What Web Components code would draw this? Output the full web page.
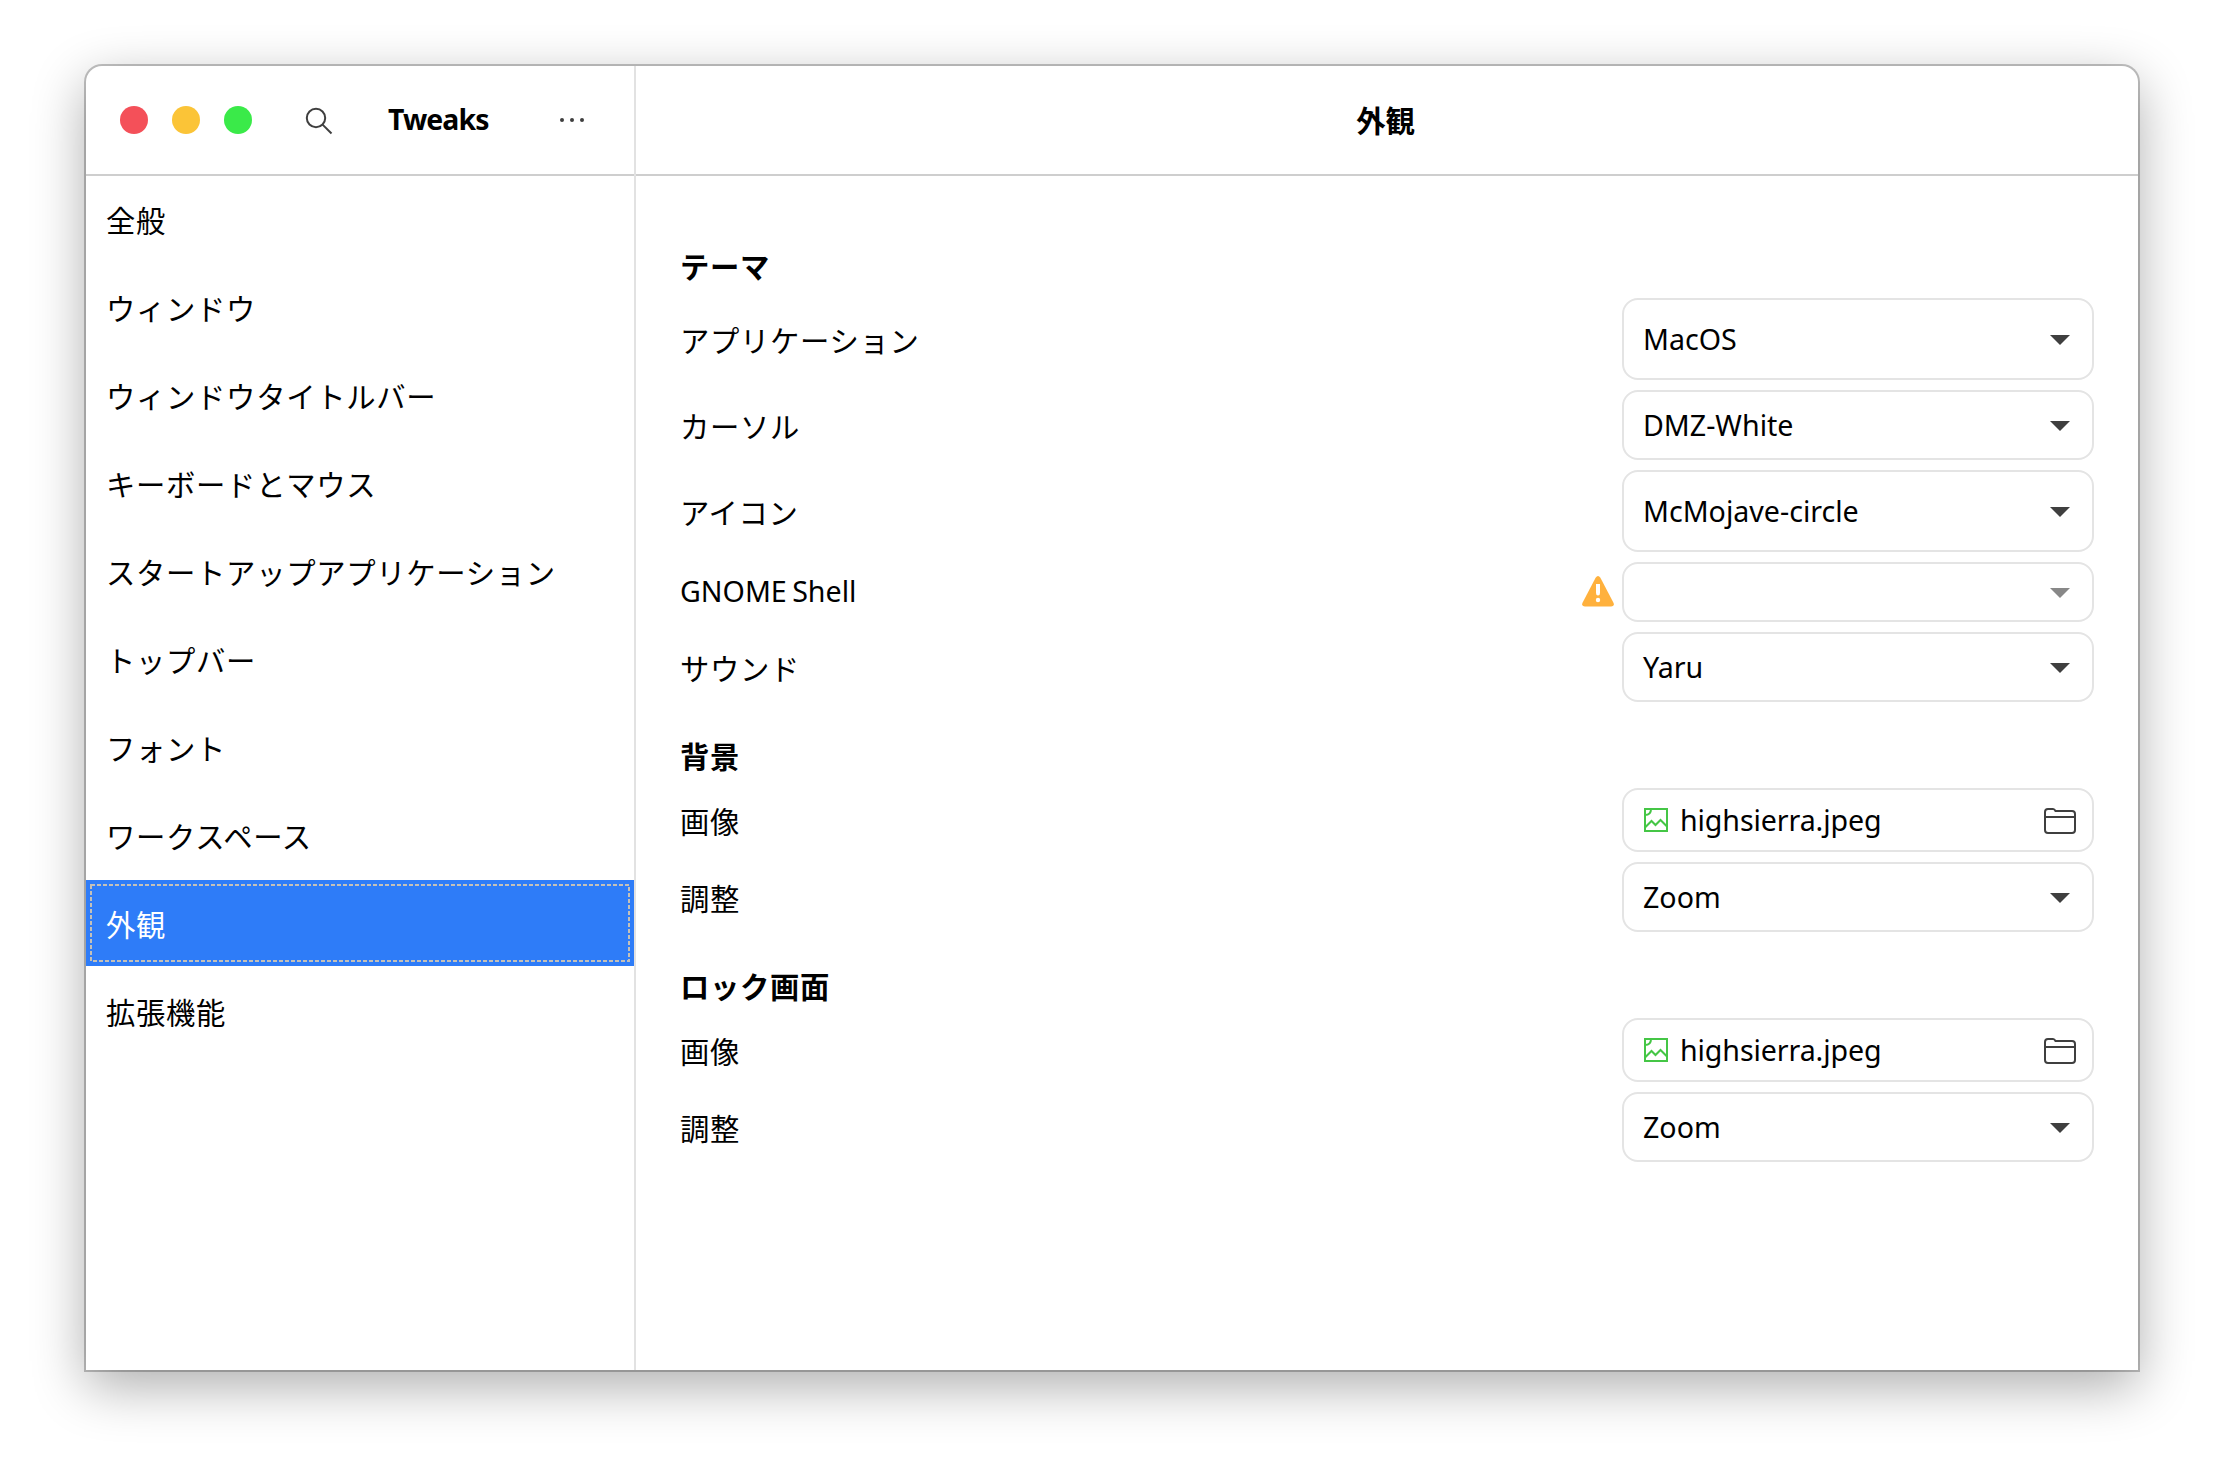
<!DOCTYPE html>
<html lang="ja">
<head>
<meta charset="utf-8">
<title>Tweaks</title>
<style>
    html, body {
        margin: 0;
        height: 100%;
        background: #fff;
    }

    body {
        box-sizing: border-box;
        padding: 66px 86px 106px;
        overflow: hidden;
        font-family: "Noto Sans", "Noto Sans CJK JP", sans-serif;
        font-size: 28.6px;
        color: #000;
    }
</style>
</head>
<body>
<tweaks-window>
    <title-bar slot="header" heading="Tweaks" page="外観"></title-bar>

    <side-item slot="sidebar">全般</side-item>
    <side-item slot="sidebar">ウィンドウ</side-item>
    <side-item slot="sidebar">ウィンドウタイトルバー</side-item>
    <side-item slot="sidebar">キーボードとマウス</side-item>
    <side-item slot="sidebar">スタートアップアプリケーション</side-item>
    <side-item slot="sidebar">トップバー</side-item>
    <side-item slot="sidebar">フォント</side-item>
    <side-item slot="sidebar">ワークスペース</side-item>
    <side-item slot="sidebar" selected>外観</side-item>
    <side-item slot="sidebar">拡張機能</side-item>

    <tweak-group heading="テーマ">
        <tweak-row label="アプリケーション"><combo-box size="82">MacOS</combo-box></tweak-row>
        <tweak-row label="カーソル"><combo-box>DMZ-White</combo-box></tweak-row>
        <tweak-row label="アイコン"><combo-box size="82">McMojave-circle</combo-box></tweak-row>
        <tweak-row label="GNOME Shell" latin warning><combo-box size="60" disabled></combo-box></tweak-row>
        <tweak-row label="サウンド"><combo-box>Yaru</combo-box></tweak-row>
    </tweak-group>
    <tweak-group heading="背景">
        <tweak-row label="画像"><file-button>highsierra.jpeg</file-button></tweak-row>
        <tweak-row label="調整"><combo-box>Zoom</combo-box></tweak-row>
    </tweak-group>
    <tweak-group heading="ロック画面">
        <tweak-row label="画像"><file-button>highsierra.jpeg</file-button></tweak-row>
        <tweak-row label="調整"><combo-box>Zoom</combo-box></tweak-row>
    </tweak-group>
</tweaks-window>

<script>
class TweaksWindow extends HTMLElement {
    constructor() {
        super();
        this.attachShadow({ mode: 'open' });
    }

    connectedCallback() {
        this.shadowRoot.innerHTML = `
            <style>
                :host {
                    display: flex;
                    flex-direction: column;
                    height: 100%;
                    background: #fff;
                    border-radius: 16px 16px 0 0;
                    box-shadow: 0 0 0 2px rgba(0, 0, 0, 0.23), 0 16px 54px rgba(0, 0, 0, 0.33);
                }
                .body {
                    flex: 1;
                    display: flex;
                    min-height: 0;
                }
                nav {
                    box-sizing: border-box;
                    width: 550px;
                    display: flex;
                    flex-direction: column;
                    gap: 2px;
                    border-right: 2px solid #e2e2e2;
                }
                main {
                    flex: 1;
                    padding: 36px 44px 0;
                }
            </style>
            <slot name="header"></slot>
            <div class="body">
                <nav><slot name="sidebar"></slot></nav>
                <main><slot></slot></main>
            </div>
        `;
    }
}

class TitleBar extends HTMLElement {
    constructor() {
        super();
        this.attachShadow({ mode: 'open' });
    }

    connectedCallback() {
        this.shadowRoot.innerHTML = `
            <style>
                :host {
                    display: flex;
                    height: 110px;
                    font-weight: 700;
                }
                .left, .right {
                    box-sizing: border-box;
                    height: 110px;
                    display: flex;
                    align-items: center;
                    border-bottom: 2px solid #cecece;
                }
                .left {
                    width: 548px;
                    padding-left: 34px;
                }
                .line {
                    width: 2px;
                    background: #e2e2e2;
                }
                .right {
                    flex: 1;
                    justify-content: center;
                    padding: 0 3px 2px 0;
                    font-family: "Noto Sans CJK JP", sans-serif;
                    font-size: 29.33px;
                }
                .light {
                    width: 28px;
                    height: 28px;
                    margin-right: 24px;
                    border-radius: 50%;
                }
                .close { background: #f45059; }
                .min { background: #fbc437; }
                .max { background: #3aea49; }
                .search { margin-left: 27px; }
                .name {
                    width: 102px;
                    margin: 0 69px 0 55px;
                    padding-bottom: 2px;
                    font-size: 28.4px;
                    white-space: nowrap;
                    letter-spacing: -0.9px;
                }
            </style>
            <div class="left">
                <span class="light close"></span>
                <span class="light min"></span>
                <span class="light max"></span>
                <svg class="search" width="30" height="30" viewBox="0 0 30 30" fill="none" stroke="#3f3f3f" stroke-width="2">
                    <circle cx="13" cy="13" r="9.2"/>
                    <path d="M19.6 19.6 L28.5 28.5"/>
                </svg>
                <span class="name">${this.getAttribute('heading')}</span>
                <svg width="26" height="6" viewBox="0 0 26 6" fill="#3f3f3f">
                    <circle cx="3" cy="3" r="2"/><circle cx="13" cy="3" r="2"/><circle cx="23" cy="3" r="2"/>
                </svg>
            </div>
            <div class="line"></div>
            <div class="right">${this.getAttribute('page')}</div>
        `;
    }
}

class SideItem extends HTMLElement {
    constructor() {
        super();
        this.attachShadow({ mode: 'open' });
    }

    connectedCallback() {
        const ring = this.hasAttribute('selected')
            ? `<svg class="ring" width="548" height="86" fill="none" stroke="#c4c0b8" stroke-width="2" stroke-dasharray="4 2">
                   <rect x="5" y="5" width="538" height="76"/>
               </svg>`
            : '';
        this.shadowRoot.innerHTML = `
            <style>
                :host {
                    position: relative;
                    box-sizing: border-box;
                    display: flex;
                    align-items: center;
                    height: 86px;
                    padding: 0 20px 1px;
                    font-family: "Noto Sans CJK JP", sans-serif;
                    font-size: 29.33px;
                    letter-spacing: 0.7px;
                    white-space: nowrap;
                }
                :host([selected]) {
                    background: #2e7cf8;
                    color: #fff;
                }
                .ring {
                    position: absolute;
                    left: 0;
                    top: 0;
                }
            </style>
            <span><slot></slot></span>${ring}
        `;
    }
}

class TweakGroup extends HTMLElement {
    constructor() {
        super();
        this.attachShadow({ mode: 'open' });
    }

    connectedCallback() {
        this.shadowRoot.innerHTML = `
            <style>
                :host {
                    display: block;
                }
                h2 {
                    box-sizing: border-box;
                    height: 86px;
                    margin: 0;
                    padding-top: 22px;
                    font: 700 29.33px/62px "Noto Sans CJK JP", sans-serif;
                    letter-spacing: 0.67px;
                }
                .rows {
                    display: flex;
                    flex-direction: column;
                    gap: 10px;
                }
            </style>
            <h2>${this.getAttribute('heading')}</h2>
            <div class="rows"><slot></slot></div>
        `;
    }
}

class TweakRow extends HTMLElement {
    constructor() {
        super();
        this.attachShadow({ mode: 'open' });
    }

    connectedCallback() {
        const warning = this.hasAttribute('warning')
            ? `<svg width="32" height="32" viewBox="0 0 32 32">
                   <path fill="#ffb13d" d="M13.6 1.7 Q16 -1.5 18.4 1.7 L31.6 27 Q32.600 30.5 29 30.5 H3 Q-0.600 30.5 0.400 27 Z"/>
                   <path fill="#fff" d="M14 8 h4 v9 q0 2.500 -2 2.500 q-2 0 -2 -2.500 Z"/>
                   <circle fill="#fff" cx="16" cy="24" r="2.2"/>
               </svg>`
            : '';
        this.shadowRoot.innerHTML = `
            <style>
                :host {
                    display: flex;
                    align-items: center;
                    gap: 8px;
                }
                .label {
                    flex: 1;
                    padding-bottom: 1px;
                    font-family: "Noto Sans CJK JP", sans-serif;
                    font-size: 29.33px;
                    line-height: 44px;
                    letter-spacing: 0.7px;
                }
                :host([latin]) .label {
                    padding-bottom: 2px;
                    font-family: "Noto Sans", sans-serif;
                    font-size: 28.6px;
                    letter-spacing: 0;
                    word-spacing: -2px;
                }
            </style>
            <span class="label">${this.getAttribute('label')}</span>
            ${warning}
            <slot></slot>
        `;
    }
}

class ComboBox extends HTMLElement {
    constructor() {
        super();
        this.attachShadow({ mode: 'open' });
    }

    connectedCallback() {
        this.shadowRoot.innerHTML = `
            <style>
                :host {
                    box-sizing: border-box;
                    display: flex;
                    align-items: center;
                    justify-content: space-between;
                    width: 472px;
                    height: ${this.getAttribute('size') || 70}px;
                    padding: 0 22px 0 19px;
                    border: 2px solid #e4e4e4;
                    border-radius: 16px;
                }
                span { padding-bottom: 1px; }
                svg {
                    margin-top: 2px;
                    fill: #3f3f3f;
                }
                :host([disabled]) svg { fill: #888; }
            </style>
            <span><slot></slot></span>
            <svg width="20" height="10"><path d="M0 0 H20 L10 10 Z"/></svg>
        `;
    }
}

class FileButton extends HTMLElement {
    constructor() {
        super();
        this.attachShadow({ mode: 'open' });
    }

    connectedCallback() {
        this.shadowRoot.innerHTML = `
            <style>
                :host {
                    box-sizing: border-box;
                    display: flex;
                    align-items: center;
                    width: 472px;
                    height: 64px;
                    padding: 0 16px 0 20px;
                    border: 2px solid #e4e4e4;
                    border-radius: 16px;
                }
                span {
                    flex: 1;
                    margin-left: 12px;
                    padding-bottom: 2px;
                    letter-spacing: -0.1px;
                }
                .folder { margin-top: 2px; }
            </style>
            <svg width="24" height="24" viewBox="0 0 24 24" fill="none" stroke="#45c646" stroke-width="2">
                <rect x="1" y="1" width="22" height="22"/>
                <path d="M1 7 Q7 7 7 1"/>
                <path d="M1 19.500 L7.500 13 L11.500 17 L16.500 12 L23 18.500"/>
            </svg>
            <span><slot></slot></span>
            <svg class="folder" width="32" height="26" viewBox="0 0 32 26" fill="none" stroke="#3f3f3f" stroke-width="2">
                <path d="M1 22 V4 Q1 1 4 1 H9 Q10.500 1 11.500 3 H28 Q31 3 31 6 V22 Q31 25 28 25 H4 Q1 25 1 22 Z"/>
                <path d="M1 9 H31"/>
            </svg>
        `;
    }
}

customElements.define('tweaks-window', TweaksWindow);
customElements.define('title-bar', TitleBar);
customElements.define('side-item', SideItem);
customElements.define('tweak-group', TweakGroup);
customElements.define('tweak-row', TweakRow);
customElements.define('combo-box', ComboBox);
customElements.define('file-button', FileButton);
</script>
</body>
</html>
